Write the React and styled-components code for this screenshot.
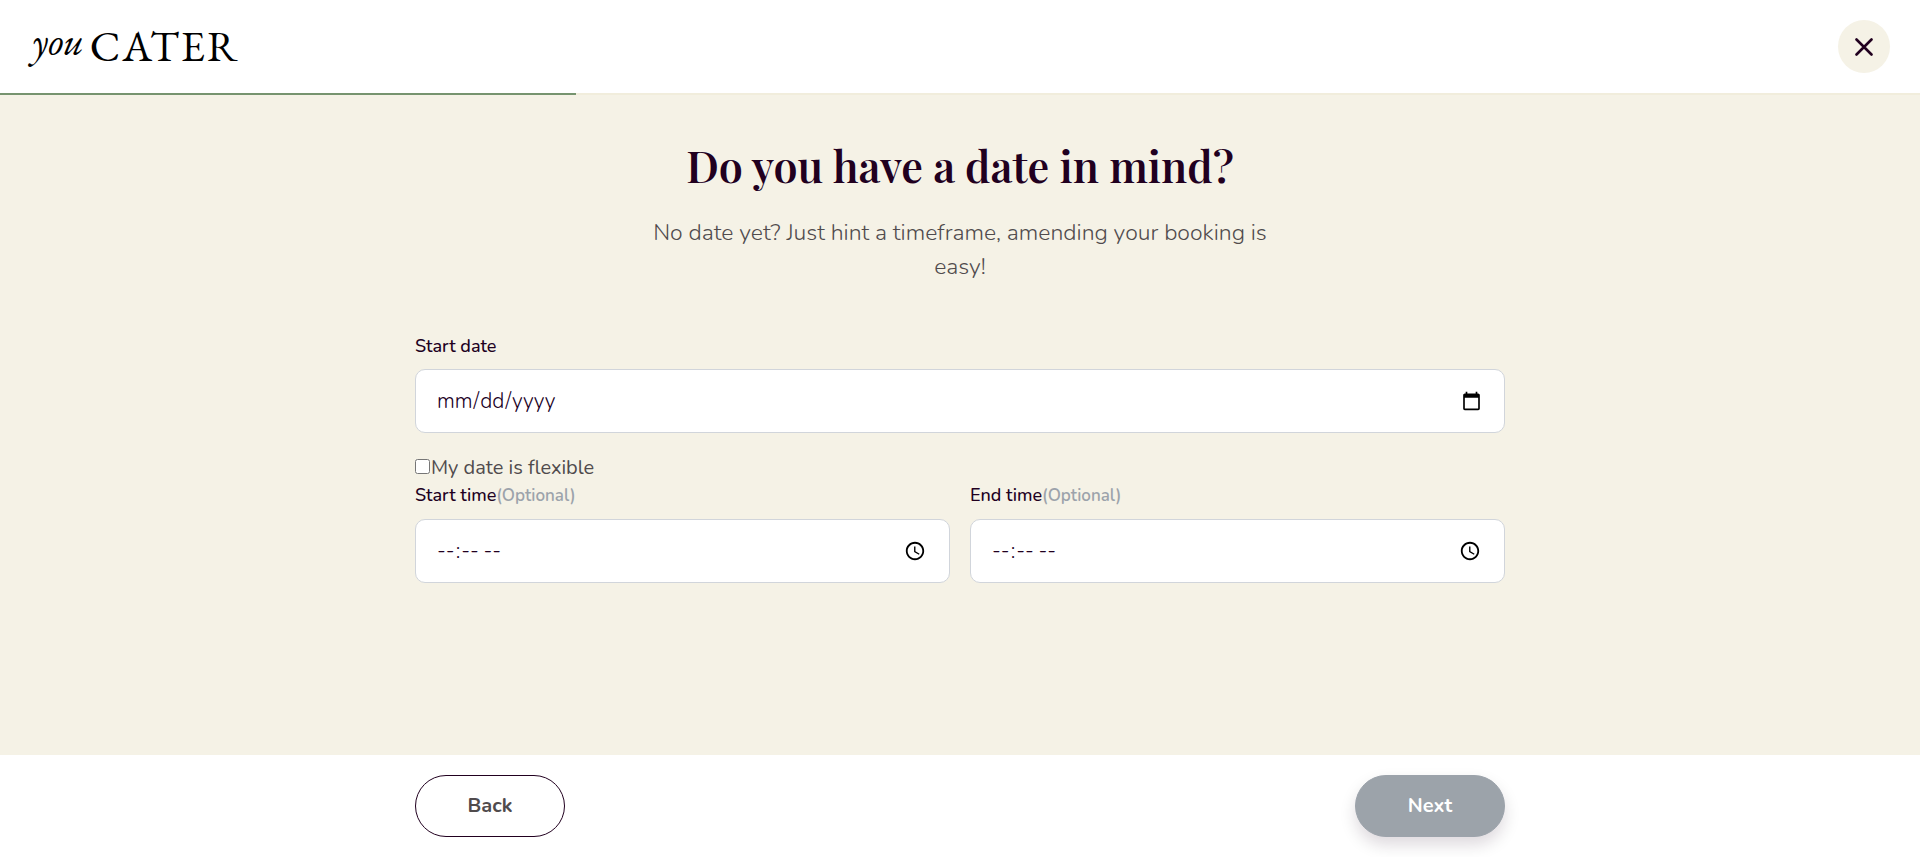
import React from "react";
import styled, { createGlobalStyle } from "styled-components";

const color = {
  ink: "#21001f",
  text: "#504b4d",
  muted: "#9ca3ab",
  cream: "#f5f2e6",
  track: "#f1eddc",
  green: "#76946f",
  line: "#d1d5db",
};

const GlobalStyle = createGlobalStyle`
  *, *::before, *::after { box-sizing: border-box; }
  body {
    margin: 0;
    background: #fff;
    color: ${color.text};
    font-family: Nunito, Lato, "Noto Sans", sans-serif;
    font-size: 20px;
    line-height: 28px;
  }
  button, input { font: inherit; }
`;

const Page = styled.div`
  display: flex;
  flex-direction: column;
  min-height: 100vh;
`;

const Header = styled.header`
  display: flex;
  align-items: center;
  justify-content: space-between;
  padding: 20px 30px;
`;

const Logo = styled.a`
  display: flex;
  align-items: center;
  gap: 6px;
  padding: 0 0 2px 2px;
  color: #000;
  font-family: "EB Garamond", "Liberation Serif", serif;
  line-height: 40px;
  text-decoration: none;
`;

const LogoScript = styled.span`
  font-size: 40px;
  font-style: italic;
  padding-bottom: 10px;
`;

const LogoName = styled.span`
  font-size: 43px;
  letter-spacing: 2px;
`;

const CloseButton = styled.button`
  display: grid;
  place-items: center;
  width: 52px;
  height: 53px;
  padding: 0;
  border: 0;
  border-radius: 50%;
  background: ${color.cream};
  color: ${color.ink};
  cursor: pointer;
`;

const ProgressTrack = styled.div`
  height: 2px;
  background: ${color.track};
`;

const ProgressBar = styled.div`
  width: ${(p) => p.$percent}%;
  height: 100%;
  background: ${color.green};
`;

const Main = styled.main`
  flex: 1;
  padding: 40px 20px;
  background: ${color.cream};
`;

const Container = styled.div`
  width: 100%;
  max-width: 1090px;
  margin: 0 auto;
`;

const Title = styled.h1`
  margin: 0 0 20px;
  color: ${color.ink};
  font-family: "Playfair Display", "Liberation Serif", serif;
  font-size: 43px;
  line-height: 60px;
  font-weight: 600;
  text-align: center;
`;

const Subtitle = styled.p`
  max-width: 640px;
  margin: 0 auto;
  padding: 1px 0 49px;
  font-size: 23px;
  line-height: 34px;
  font-weight: 300;
  text-align: center;
`;

const Field = styled.div`
  flex: 1;
  display: flex;
  flex-direction: column;
  gap: 10px;
`;

const Label = styled.label`
  color: ${color.ink};
  font-size: 18px;
  line-height: 26px;
  font-weight: 500;
`;

const Optional = styled.span`
  color: ${color.muted};
  font-size: 17px;
  font-weight: 600;
`;

const Input = styled.input`
  width: 100%;
  height: 64px;
  padding: 0 20px;
  border: 1px solid ${color.line};
  border-radius: 10px;
  background: #fff;
  color: ${color.ink};
  font-size: 21px;
  font-weight: 300;
  outline: 0;
`;

const CheckRow = styled.label`
  display: flex;
  align-items: baseline;
  gap: 1px;
  margin-top: 20px;
  line-height: 29px;
`;

const Checkbox = styled.input`
  width: 15px;
  height: 15px;
  margin: 0;
`;

const FieldRow = styled.div`
  display: flex;
  gap: 20px;
`;

const Footer = styled.footer`
  padding: 20px;
`;

const Actions = styled(Container)`
  display: flex;
  justify-content: space-between;
`;

const PillButton = styled.button`
  width: 150px;
  height: 62px;
  border: 1px solid ${(p) => (p.$filled ? color.muted : color.ink)};
  border-radius: 31px;
  background: ${(p) => (p.$filled ? "#9ca3aa" : "#fff")};
  color: ${(p) => (p.$filled ? "#fff" : color.text)};
  box-shadow: ${(p) => (p.$filled ? "0 8px 16px rgba(33, 0, 31, 0.15)" : "none")};
  font-weight: 700;
  cursor: pointer;
`;

function TimeField({ id, label }) {
  return (
    <Field>
      <Label htmlFor={id}>
        {label}
        <Optional>(Optional)</Optional>
      </Label>
      <Input id={id} type="time" />
    </Field>
  );
}

export default function App() {
  return (
    <Page>
      <GlobalStyle />
      <Header>
        <Logo href="#">
          <LogoScript>you</LogoScript>
          <LogoName>CATER</LogoName>
        </Logo>
        <CloseButton type="button" aria-label="Close">
          <svg width="18" height="18" viewBox="0 0 18 18" fill="none" stroke="currentColor" strokeWidth="2.6" strokeLinecap="round">
            <path d="M1.5 1.5 16.5 16.5M16.5 1.5 1.5 16.5" />
          </svg>
        </CloseButton>
      </Header>
      <ProgressTrack role="progressbar" aria-valuenow={30} aria-valuemin={0} aria-valuemax={100}>
        <ProgressBar $percent={30} />
      </ProgressTrack>
      <Main>
        <Container as="form">
          <Title>Do you have a date in mind?</Title>
          <Subtitle>No date yet? Just hint a timeframe, amending your booking is easy!</Subtitle>
          <Field>
            <Label htmlFor="start-date">Start date</Label>
            <Input id="start-date" type="date" />
          </Field>
          <CheckRow>
            <Checkbox type="checkbox" />
            My date is flexible
          </CheckRow>
          <FieldRow>
            <TimeField id="start-time" label="Start time" />
            <TimeField id="end-time" label="End time" />
          </FieldRow>
        </Container>
      </Main>
      <Footer>
        <Actions>
          <PillButton type="button">Back</PillButton>
          <PillButton type="button" $filled>Next</PillButton>
        </Actions>
      </Footer>
    </Page>
  );
}
